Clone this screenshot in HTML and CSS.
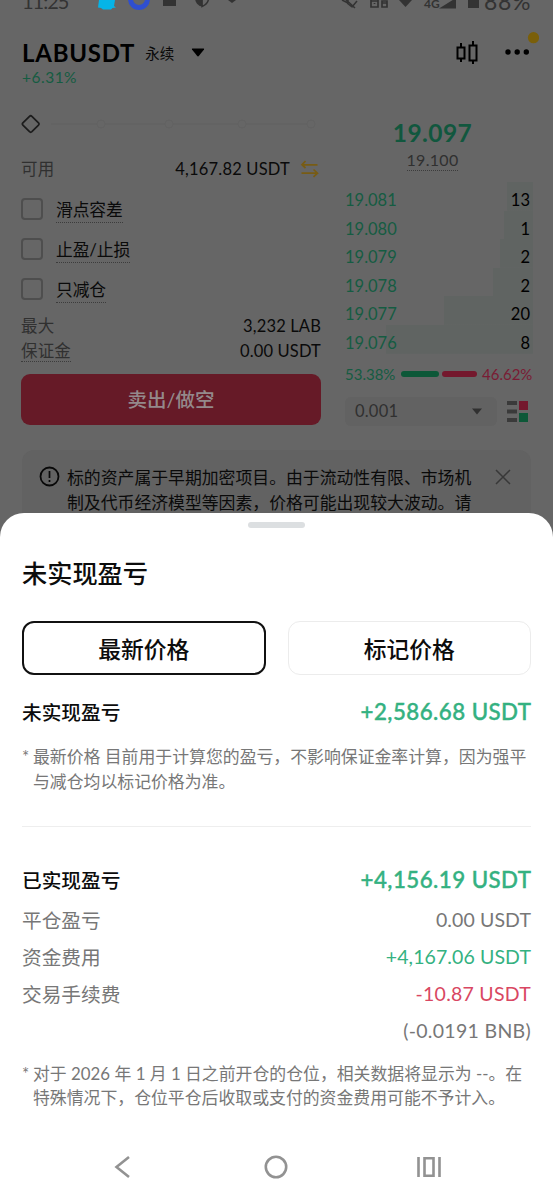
FILE: index.html
```html
<!DOCTYPE html>
<html lang="zh-CN">
<head>
<meta charset="utf-8">
<title>LABUSDT</title>
<link rel="stylesheet" href="styles.css">
</head>
<body>
<div class="screen">
  <div class="status">
    <span class="clock">11:25</span>
    <svg class="status-icons" width="420" height="14" viewBox="0 0 420 14">
      <path d="M3 0H19L18 6L20 7.500L16.500 8L15 9.500H7L5 8L2 7.500Z" fill="#05b4e8"/>
      <path d="M34.500-1a8.500 8.500 0 0 0 17 0" fill="none" stroke="#2f4fd0" stroke-width="5"/>
      <path d="M67 0H80V6H67Z" fill="#333"/>
      <path d="M99-3a7.500 9 0 0 0 7.500 9.500V-3Z" fill="#333"/>
      <path d="M106-1V6.500Q112 4 112.500-1" fill="none" stroke="#333" stroke-width="1.500"/>
      <path d="M132 0L136 3L140 0Z" fill="#333"/>
      <path d="M246 0l6 3V-1M247-3l12 11M256 7l5-6M251 3l5 4" fill="none" stroke="#333" stroke-width="1.500"/>
      <path d="M275-1V7H282V-1M282 1H275M286 7V1H291V7ZM278.500 3v1M286 3h5" fill="none" stroke="#333" stroke-width="1.700"/>
      <path d="M303 0H316L309.500 7Z" fill="#333"/>
      <path d="M343 8.500L360-2V8.500Z" fill="#333"/>
      <path d="M372 0H383V8H372Z" fill="#333"/>
    </svg>
    <span class="network">4G</span>
    <span class="battery">88%</span>
  </div>

  <header class="top">
    <div class="pair">
      <div class="pair-line">
        <span class="symbol">LABUSDT</span>
        <span class="perp">永续</span>
        <svg width="14" height="9" viewBox="0 0 14 9"><path d="M1.500.5H12.500Q13.500.5 13 1.500L8 7.800Q7 9 6 7.800L1 1.500Q.5.5 1.500.5Z" fill="#000"/></svg>
      </div>
      <div class="change">+6.31%</div>
    </div>
    <div class="tools">
      <svg width="24" height="26" viewBox="0 0 24 26" fill="none" stroke="#000" stroke-width="2"><path d="M2.500 7.500H9.500V18.500H2.500ZM6 3V7.500M6 18.500V22M14.500 5.500H21.500V20.500H14.500ZM18 1V5.500M18 20.500V24"/></svg>
      <svg width="34" height="34" viewBox="0 0 34 34"><g fill="#000"><circle cx="3" cy="21" r="2.700"/><circle cx="12.200" cy="21" r="2.700"/><circle cx="21.300" cy="21" r="2.700"/></g><circle cx="28.500" cy="6.700" r="5.600" fill="#7a5f0a"/></svg>
    </div>
  </header>

  <main class="trade">
    <section class="form">
      <svg class="slider" width="300" height="22" viewBox="0 0 300 22" fill="none">
        <path d="M30 11H290" stroke="#606060"/>
        <g stroke="#626262" fill="#666"><circle cx="80" cy="11" r="4"/><circle cx="148" cy="11" r="4"/><circle cx="221" cy="11" r="4"/><circle cx="290" cy="11" r="4"/></g>
        <path d="M8.500 3.300Q9.700 2.200 10.900 3.300L17.500 9.900Q18.600 11 17.500 12.100L10.900 18.700Q9.700 19.800 8.500 18.700L1.900 12.100Q.8 11 1.900 9.900Z" stroke="#1c1c1c" stroke-width="1.700"/>
      </svg>
      <div class="pairrow available"><span class="muted">可用</span><span class="amount">4,167.82 USDT
        <svg class="swap" width="19" height="18" viewBox="0 0 19 18" fill="none" stroke="#785c14" stroke-width="1.700"><path d="M5.500 1L2 4.800L5.500 8M2 4.800H17.500M13.500 9.500L17.500 13.200L13.500 16.800M17.500 13.200H1.500"/></svg></span></div>
      <div class="check"><i class="box"></i><span class="dotted">滑点容差</span></div>
      <div class="check"><i class="box"></i><span class="dotted">止盈/止损</span></div>
      <div class="check"><i class="box"></i><span class="dotted">只减仓</span></div>
      <div class="pairrow max"><span class="muted">最大</span><span>3,232 LAB</span></div>
      <div class="pairrow"><span class="muted dotted">保证金</span><span>0.00 USDT</span></div>
      <div class="sell">卖出/做空</div>
    </section>

    <section class="book">
      <div class="last">19.097</div>
      <div class="mark"><span class="dotted">19.100</span></div>
      <div class="depth">
        <div class="level l1"><span>19.081</span><b>13</b></div>
        <div class="level l2"><span>19.080</span><b>1</b></div>
        <div class="level l3"><span>19.079</span><b>2</b></div>
        <div class="level l4"><span>19.078</span><b>2</b></div>
        <div class="level l5"><span>19.077</span><b>20</b></div>
        <div class="level l6"><span>19.076</span><b>8</b></div>
      </div>
      <div class="ratio"><span class="buy">53.38%</span><i class="bar green"></i><i class="bar red"></i><span class="ask">46.62%</span></div>
      <div class="step">
        <div class="select"><span>0.001</span><svg width="10" height="7" viewBox="0 0 10 7"><path d="M0 .5H10L5 6.500Z" fill="#303030"/></svg></div>
        <svg width="22" height="23" viewBox="0 0 22 23"><path d="M0 1H10V5H0ZM0 9.500H10V13.500H0ZM0 18H10V22H0Z" fill="#3a3a3a"/><path d="M12 1H21V10H12Z" fill="#74182d"/><path d="M12 13H21V22H12Z" fill="#0d5838"/></svg>
      </div>
    </section>
  </main>

  <div class="notice">
    <svg width="21" height="21" viewBox="0 0 21 21" fill="none" stroke="#080808"><circle cx="10.500" cy="10.500" r="9" stroke-width="1.800"/><path d="M10.500 5V12M10.500 14V16" stroke-width="1.700"/></svg>
    <p>标的资产属于早期加密项目。由于流动性有限、市场机<br>制及代币经济模型等因素，价格可能出现较大波动。请</p>
    <svg class="close" width="16" height="16" viewBox="0 0 16 16"><path d="M1 1L15 15M15 1L1 15" stroke="#383838" stroke-width="1.500"/></svg>
  </div>

  <div class="sheet">
    <div class="handle"></div>
    <h1>未实现盈亏</h1>
    <div class="tabs"><div class="tab on">最新价格</div><div class="tab">标记价格</div></div>
    <div class="head"><span>未实现盈亏</span><b>+2,586.68 USDT</b></div>
    <div class="note first"><i>*</i><p>最新价格 目前用于计算您的盈亏，不影响保证金率计算，因为强平<br>与减仓均以标记价格为准。</p></div>
    <div class="rule"></div>
    <div class="head"><span>已实现盈亏</span><b>+4,156.19 USDT</b></div>
    <div class="items">
      <div class="item"><span>平仓盈亏</span><span class="num zero">0.00 USDT</span></div>
      <div class="item"><span>资金费用</span><span class="num up">+4,167.06 USDT</span></div>
      <div class="item"><span>交易手续费</span><span class="num down">-10.87 USDT</span></div>
      <div class="item"><span></span><span class="num fee">(-0.0191 BNB)</span></div>
    </div>
    <div class="note last-note"><i>*</i><p>对于 2026 年 1 月 1 日之前开仓的仓位，相关数据将显示为 --。在<br>特殊情况下，仓位平仓后收取或支付的资金费用可能不予计入。</p></div>
    <nav class="nav">
      <svg width="26" height="26" viewBox="0 0 26 26"><path d="M19 3L6.500 13L19 23" /></svg>
      <svg width="26" height="26" viewBox="0 0 26 26"><circle cx="13" cy="13" r="10.200"/></svg>
      <svg width="26" height="26" viewBox="0 0 26 26"><path d="M2.500 3V23M23.500 3V23M8.500 4.200H17.500V21.800H8.500Z"/></svg>
    </nav>
  </div>
</div>
</body>
</html>
```
FILE: styles.css
```css
* { box-sizing: border-box; }
body { margin: 0; font-family: Lato, "Noto Sans CJK SC", sans-serif; }
h1, p { margin: 0; }
i { font-style: normal; }
svg { display: block; flex: none; }

.screen { position: relative; width: 553px; height: 1200px; overflow: hidden; background: #666; color: #0a0a0a; }

.status { position: relative; height: 14px; overflow: hidden; color: #333; }
.clock { position: absolute; left: 22px; top: -9px; font-size: 20px; line-height: 20px; letter-spacing: -1px; }
.status-icons { position: absolute; left: 96px; top: 0; }
.network { position: absolute; left: 424px; top: -3px; font-size: 12px; line-height: 14px; font-weight: 700; }
.battery { position: absolute; left: 484px; top: -10px; font-size: 23px; line-height: 22px; letter-spacing: .6px; }

.top { display: flex; justify-content: space-between; height: 80px; padding: 24px 14px 0 22px; }
.pair-line { display: flex; align-items: center; height: 28px; }
.symbol { font-size: 24px; font-weight: 700; letter-spacing: .75px; color: #000; }
.perp { margin: 0 17px 0 10px; font-size: 14.500px; }
.change { margin-top: 1px; font-size: 15.500px; line-height: 20px; letter-spacing: .5px; color: #155c42; }
.tools { display: flex; gap: 26px; }
.tools svg:first-child { margin-top: 2px; }
.tools svg:last-child { margin-top: -7px; }

.trade { display: flex; justify-content: space-between; padding: 0 20px 0 21px; height: 356px; }
.form { width: 300px; padding-top: 19px; font-size: 16.500px; }
.pairrow { display: flex; justify-content: space-between; align-items: center; height: 25px; line-height: 20px; letter-spacing: .15px; }
.available { margin-top: 21px; margin-bottom: 8px; padding: 0 2px 0 0; }
.amount { display: flex; align-items: center; gap: 10px; letter-spacing: .2px; }
.muted { color: #303030; }
.dotted { border-bottom: 1px dotted #3c3c3c; }
.check { display: flex; align-items: center; height: 40px; gap: 13px; font-size: 16.800px; line-height: 24px; }
.check .dotted { margin-top: 2px; letter-spacing: -.1px; }
.box { width: 22px; height: 22px; border: 2px solid #4e4e4e; border-radius: 4px; }
.max { margin-top: 4.500px; }
.sell { height: 51px; margin-top: 10.500px; border-radius: 9px; background: #661a27; color: #94898b; font-size: 19.500px; font-weight: 500; line-height: 52px; text-align: center; }

.book { width: 188px; padding-top: 24px; }
.last { padding-right: 13px; color: #11573e; font-size: 24.500px; line-height: 30px; font-weight: 700; letter-spacing: .4px; text-align: center; }
.mark { height: 34px; padding-right: 13px; color: #303030; font-size: 16px; line-height: 20px; letter-spacing: .3px; text-align: center; padding-top: 1px; }
.mark .dotted { display: inline-block; height: 22px; line-height: 21px; }
.level { display: flex; justify-content: space-between; height: 28.600px; padding: 8px 3px 0 0; font-size: 16.500px; line-height: 21px; color: #155c42; background: linear-gradient(#606462, #606462) no-repeat right; }
.level b { font-weight: 400; color: #000; }
.l1 { background-size: 26px 100%; }
.l2 { background-size: 29px 100%; }
.l3 { background-size: 33px 100%; }
.l4 { background-size: 40px 100%; }
.l5 { background-size: 89px 100%; }
.l6 { background-size: 147px 100%; }
.ratio { display: flex; align-items: center; height: 41px; font-size: 15px; }
.buy { color: #155c42; width: 56px; }
.ask { color: #7a1b34; width: 51px; }
.bar { height: 6px; border-radius: 3px; }
.green { width: 38px; margin-right: 3px; background: #0d5838; }
.red { width: 35px; margin-right: 5px; background: #74182d; }
.step { display: flex; align-items: center; gap: 10px; height: 29px; margin-top: 2px; }
.select { display: flex; align-items: center; justify-content: space-between; width: 152px; height: 29px; padding: 0 15px 0 10px; border-radius: 6px; background: #626262; color: #303030; font-size: 16.500px; letter-spacing: .2px; }

.notice { display: flex; align-items: flex-start; height: 130px; margin: 0 22px; padding: 16px 20px 0 17px; border-radius: 12px; background: #626262; }
.notice p { flex: 1; margin-left: 7px; white-space: nowrap; font-size: 16.850px; line-height: 24.500px; }
.close { margin-top: 3px; }

.sheet { position: absolute; left: 0; right: 0; top: 513px; bottom: 0; padding: 9px 22px 0; border-radius: 24px 24px 0 0; background: #fff; color: #0c0c0c; }
.handle { width: 57px; height: 6px; margin: 0 auto; border-radius: 3px; background: #dcdfe1; }
h1 { margin-top: 27px; font-size: 25.200px; line-height: 36px; font-weight: 500; }
.tabs { display: grid; grid-template-columns: 1fr 1fr; gap: 22px; margin-top: 30px; }
.tab { height: 54px; border: 1.500px solid #ececec; border-radius: 12px; font-size: 22.800px; font-weight: 500; line-height: 54px; text-align: center; }
.on { border: 2px solid #111; line-height: 52px; }
.head { display: flex; justify-content: space-between; align-items: center; height: 30px; margin-top: 21px; font-size: 19.700px; font-weight: 500; }
.head b { font-size: 22.300px; font-weight: 500; letter-spacing: .45px; margin-right: -.5px; color: #34b181; -webkit-text-stroke: .4px #34b181; }
.note { display: flex; color: #777; font-size: 16.880px; line-height: 24.500px; white-space: nowrap; }
.note i { width: 11px; font-size: 17px; }
.first { margin-top: 19px; }
.rule { height: 1px; margin-top: 32px; background: #eee; }
.rule + .head { margin-top: 37px; }
.items { margin-top: 7px; }
.item { display: flex; justify-content: space-between; align-items: center; height: 36.900px; color: #777; font-size: 19.700px; }
.num { font-size: 19.500px; letter-spacing: .1px; }
.down { letter-spacing: .25px; }
.fee { letter-spacing: .3px; }
.up { color: #34b181; }
.down { color: #d94762; }
.last-note { margin-top: 13px; }
.nav { display: flex; justify-content: space-between; margin: 43px 89px 0 88px; }
.nav svg { fill: none; stroke: #929292; stroke-width: 2.600; }
```
